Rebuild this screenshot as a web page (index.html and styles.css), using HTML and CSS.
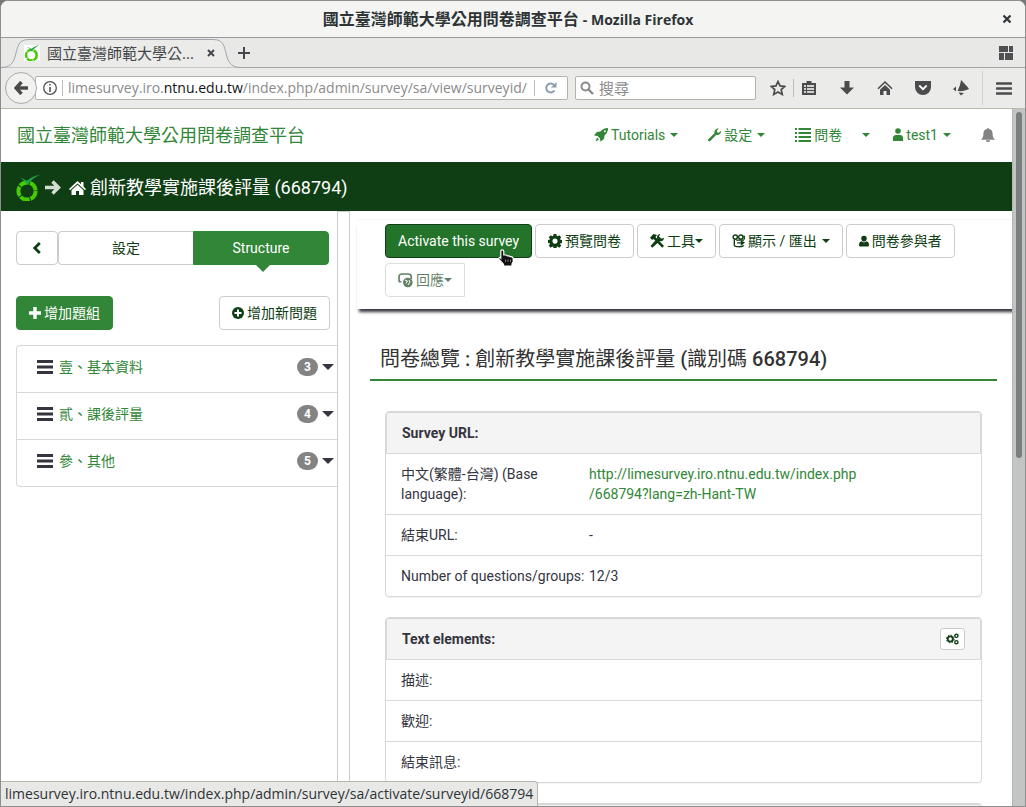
FILE: index.html
```html
<!DOCTYPE html>
<html lang="zh-Hant">
<head>
<meta charset="utf-8">
<title>國立臺灣師範大學公用問卷調查平台</title>
<link rel="stylesheet" href="styles.css">
</head>
<body>
<svg class="defs" aria-hidden="true">
  <defs>
    <symbol id="gear" viewBox="0 0 16 16"><path fill-rule="evenodd" d="M6.400 0h3.200l.4 2.300 1 .4 1.900-1.300 2.200 2.200-1.300 1.900.4 1 2.300.4v3.200l-2.300.4-.4 1 1.300 1.900-2.200 2.200-1.900-1.300-1 .4-.4 2.300H6.400l-.4-2.300-1-.4-1.900 1.300L.9 13.400l1.300-1.900-.4-1L0 10.100V6.900l1.800-.4.4-1L.9 3.600l2.200-2.200L5 2.700l1-.4zM8 5.200a2.900 2.900 0 1 0 0 5.800 2.900 2.900 0 0 0 0-5.800z"/></symbol>
    <symbol id="user" viewBox="0 0 12 14"><path d="M6 0a3.300 3.300 0 0 1 3.300 3.500C9.300 5.500 7.800 7.200 6 7.200S2.700 5.500 2.700 3.500A3.300 3.300 0 0 1 6 0zM3 6.700c.8.900 1.800 1.400 3 1.400s2.200-.5 3-1.400c2 .4 3 1.900 3 4.700 0 1-.6 1.600-1.600 1.600H1.600C.6 13 0 12.400 0 11.400 0 8.600 1 7.100 3 6.700z"/></symbol>
    <symbol id="home" viewBox="0 0 17 16"><path d="M8.500 1 12 4.300V2h2.500v4.600L17 9l-1 1.200L8.500 3.400 1 10.200 0 9z"/><path d="m8.500 4.800 6 5.400V15H10v-4H7v4H2.500v-4.800z"/></symbol>
    <symbol id="bars" viewBox="0 0 16 14"><path d="M0 0h16v3H0zM0 5.500h16v3H0zM0 11h16v3H0z"/></symbol>
    <symbol id="lime" viewBox="0 0 24 26"><circle cx="11" cy="16.500" r="8.600" fill="none" stroke="#4c0" stroke-width="4" stroke-dasharray="9.800 1"/><path fill="#19a843" d="M4 3c2.800.8 5 2 6.800 3.700C14 3.600 18 1.200 24 .3 18.500 2.800 14.500 6 11.500 10.500 9.500 7.500 7 5 4 3z"/></symbol>
  </defs>
</svg>

<div class="window">
  <header class="titlebar">
    <span class="window-title">國立臺灣師範大學公用問卷調查平台 <span>- Mozilla Firefox</span></span>
    <button class="plain window-close" aria-label="Close window"><svg width="10" height="10" viewBox="0 0 10 10"><path d="m1.500 1.500 7 7m0-7-7 7" stroke="#2e3436" stroke-width="2.200"/></svg></button>
  </header>

  <div class="tabstrip">
    <div class="tab">
      <svg class="tab-shape" viewBox="0 0 240 30" width="240" height="30"><path d="M0 29.500C8 29.500 12 26 14 19 17 8 17 1.500 28 1.500H212C223 1.500 223 8 226 19 228 26 232 29.500 240 29.500" fill="#ebebe9" stroke="#a0a4ac"/></svg>
      <svg class="tab-icon" width="16" height="16"><use href="#lime"/></svg>
      <span class="tab-title">國立臺灣師範大學公...</span>
      <button class="plain" aria-label="Close tab"><svg width="8" height="8" viewBox="0 0 8 8"><path d="m1 1 6 6m0-6L1 7" stroke="#44484a" stroke-width="2"/></svg></button>
    </div>
    <button class="plain new-tab" aria-label="New tab"><svg width="12" height="12" viewBox="0 0 12 12"><path d="M6 0v12M0 6h12" stroke="#44484a" stroke-width="2"/></svg></button>
    <button class="plain tab-groups" aria-label="Tab groups"><svg width="14" height="14" viewBox="0 0 14 14" fill="#505052"><path d="M0 0h9v6H0zM10 0h4v6h-4zM0 7h5v7H0zM6 7h8v7H6z"/></svg></button>
  </div>

  <div class="navbar">
    <button class="back" aria-label="Back"><svg width="14" height="14" viewBox="0 0 14 14"><path d="M7.500 1 2 7l5.500 6M2.500 7H14" fill="none" stroke="#4a4a4a" stroke-width="3.400"/></svg></button>
    <div class="urlbar">
      <svg width="16" height="16" viewBox="0 0 16 16"><circle cx="8" cy="8" r="6.300" fill="none" stroke="#505050" stroke-width="1.300"/><path d="M7.200 4h1.600v1.600H7.200zM7.200 7h1.600v5H7.200z" fill="#505050"/></svg>
      <span class="url-sep"></span>
      <div class="url" role="textbox" aria-label="Address" contenteditable="true">limesurvey.iro.<b>ntnu.edu.tw</b>/index.php/admin/survey/sa/view/surveyid/</div>
      <span class="url-sep reload-sep"></span>
      <button class="plain" aria-label="Reload"><svg width="12" height="12" viewBox="0 0 12 12"><path d="M9.500 8.500A4.500 4.500 0 1 1 9 2.900" fill="none" stroke="#8a9bad" stroke-width="1.900"/><path d="M11.500 0v5.500H6z" fill="#8a9bad"/></svg></button>
    </div>
    <label class="searchbar">
      <svg width="14" height="14" viewBox="0 0 14 14"><circle cx="5.500" cy="5.500" r="4" fill="none" stroke="#8a8a8a" stroke-width="2"/><path d="m8.500 8.500 4.500 4.500" stroke="#8a8a8a" stroke-width="2.400"/></svg>
      <input type="search" placeholder="搜尋" aria-label="搜尋">
    </label>
    <div class="nav-icons">
      <button class="plain" aria-label="Bookmark"><svg width="16" height="16" viewBox="0 0 16 16"><path d="m8 1.500 2 4.400 4.800.5-3.600 3.200 1.100 4.800L8 11.900l-4.300 2.500 1.100-4.800L1.200 6.400 6 5.900z" fill="none" stroke="#4c4c4c" stroke-width="1.700"/></svg></button>
      <span class="icon-sep"></span>
      <button class="plain" aria-label="Bookmarks list"><svg width="14" height="16" viewBox="0 0 14 16"><path d="M4.500 1h5v2H14v12H0V3h4.500z" fill="#4c4c4c"/><path d="M2 6h2m1 0h7M2 9h2m1 0h7M2 12h2m1 0h7" stroke="#fff" stroke-width="1.600"/></svg></button>
      <button class="plain" aria-label="Downloads"><svg width="14" height="16" viewBox="0 0 14 16"><path d="M4.500 1h5v6.500H14l-7 7-7-7h4.500z" fill="#4c4c4c"/></svg></button>
      <button class="plain" aria-label="Home page"><svg width="16" height="16" viewBox="0 0 16 16"><path d="M1 8.800 8 2l7 6.800" fill="none" stroke="#4c4c4c" stroke-width="1.600"/><path d="m8 5 5 4.800V15H9.500v-4h-3v4H3V9.800z" fill="#4c4c4c"/></svg></button>
      <button class="plain" aria-label="Pocket"><svg width="16" height="14" viewBox="0 0 16 14"><path d="M0 0h16v6a8 8 0 0 1-16 0z" fill="#4c4c4c"/><path d="m4.300 4.500 3.700 3.700 3.700-3.700" fill="none" stroke="#fff" stroke-width="1.800"/></svg></button>
      <button class="plain" aria-label="Extension"><svg width="16" height="16" viewBox="0 0 16 16" fill="#4c4c4c"><path d="M8 0c2 2 6 6 8 9-3 1.500-7 2.500-11.500 2C6 8 7.500 4 8 0zM3 6.500v5L0 9zM5.500 12.500 11 13l-3 2.500z"/></svg></button>
      <span class="icon-sep tall"></span>
      <button class="plain" aria-label="Menu"><svg width="16" height="13" viewBox="0 0 16 13"><path d="M1 1.500h14M1 6.500h14M1 11.500h14" stroke="#4c4c4c" stroke-width="2.600" stroke-linecap="round"/></svg></button>
    </div>
  </div>

  <div class="viewport">
    <div class="page">
      <nav class="site-nav">
        <a class="brand" href="#">國立臺灣師範大學公用問卷調查平台</a>
        <div class="site-links">
          <a href="#"><svg width="14" height="14" viewBox="0 0 14 14"><path d="M14 0c.1 3-1 5.300-3.500 7.500L10 11l-3.500 2.500-.6-3-2.300-2.400-3.600-.6L2.800 4l3.600-.5C8.600 1 11 0 14 0z"/><path d="M3 9.500 5 11.500 1.500 13.500z"/><circle cx="10.800" cy="3.200" r="1" fill="#fff"/></svg>Tutorials<i class="caret"></i></a>
          <a href="#"><svg width="13" height="14" viewBox="0 0 13 14"><path d="M11 .5 8.900 2.600l.3 1.800 1.800.3L13 2.800C13.300 5.500 11 7.600 8.300 6.800l-6 6.200c-1.200 1-2.900-.3-2-1.700l6.200-6C5.800 2.400 8.300-.1 11 .5z"/></svg>設定<i class="caret"></i></a>
          <a href="#"><svg width="16" height="14" viewBox="0 0 16 14"><path d="M0 0h2v2H0zM3.500 0H16v2H3.500zM0 4h2v2H0zM3.500 4H16v2H3.500zM0 8h2v2H0zM3.500 8H16v2H3.500zM0 12h2v2H0zM3.500 12H16v2H3.500z"/></svg>問卷</a>
          <a class="split" href="#" aria-label="問卷選單"><i class="caret"></i></a>
          <a class="account" href="#"><svg width="10" height="13" viewBox="0 0 10 13"><circle cx="5" cy="3" r="2.800"/><path d="M0 13V10C0 7.500 1.500 7 5 7s5 .5 5 3v3z"/></svg>test1<i class="caret"></i></a>
          <a class="bell" href="#" aria-label="Notifications"><svg width="14" height="14" viewBox="0 0 14 14"><path d="M6 1a1 1 0 0 1 2 0c2.500.5 3.600 2.300 3.600 4.500 0 3 .6 4.500 2.400 6.300H0c1.800-1.800 2.400-3.300 2.400-6.300C2.400 3.300 3.500 1.500 6 1zM5 12.200h4a2 2 0 0 1-4 0z"/></svg></a>
        </div>
      </nav>
      <div class="crumbs">
        <svg width="24" height="27"><use href="#lime"/></svg>
        <svg class="arrow" width="16" height="15" viewBox="0 0 16 15"><path d="m7.500 1.500 6 6-6 6M0 7.500h12.500" fill="none" stroke="#d5dcd5" stroke-width="3.400"/></svg>
        <a href="#"><svg width="17" height="16"><use href="#home"/></svg>創新教學實施課後評量 (668794)</a>
      </div>

      <div class="columns">
        <aside class="sidebar">
          <div class="switcher">
            <button class="btn collapse" aria-label="Collapse"><svg width="10" height="14" viewBox="0 0 10 14"><path d="M7.800 2 2.800 7l5 5" fill="none" stroke="#0f3e14" stroke-width="2.800"/></svg></button>
            <button class="btn grow left">設定</button>
            <button class="btn grow right active">Structure</button>
          </div>
          <div class="add-row">
            <button class="btn active"><svg width="12" height="12" viewBox="0 0 12 12"><path d="M6 0v12M0 6h12" stroke="#fff" stroke-width="3.400"/></svg>增加題組</button>
            <button class="btn"><svg width="12" height="12" viewBox="0 0 12 12"><circle cx="6" cy="6" r="6"/><path d="M6 2.500v7M2.500 6h7" stroke="#fff" stroke-width="2"/></svg>增加新問題</button>
          </div>
          <ul class="groups">
            <li><svg width="16" height="14"><use href="#bars"/></svg><a href="#">壹、基本資料</a><span class="badge">3</span><i class="caret big"></i></li>
            <li><svg width="16" height="14"><use href="#bars"/></svg><a href="#">貳、課後評量</a><span class="badge">4</span><i class="caret big"></i></li>
            <li><svg width="16" height="14"><use href="#bars"/></svg><a href="#">參、其他</a><span class="badge">5</span><i class="caret big"></i></li>
          </ul>
        </aside>
        <div class="splitter"></div>
        <main class="main">
          <div class="toolbar">
            <button class="btn primary">Activate this survey
              <svg class="pointer" width="16" height="18" viewBox="0 0 16 18"><path d="M4 .8C5.200.8 5.800 1.500 5.800 2.500V6h2c.6 0 1.200.3 1.500.8h1.500c.6 0 1.100.3 1.400.8.8-.1 3 .1 3 2.200v3l-1.200 2V17H5.500v-1.800L1 10.500c-.9-1.500.8-2.700 1.800-1.500V2.500c0-1 .3-1.700 1.200-1.700z" fill="#111" stroke="#fff" stroke-width="1.200"/><path d="M7.500 10.500v2.500m2.500-2.500v2.500m2.500-2.500v2.500" stroke="#777"/></svg></button>
            <button class="btn"><svg width="14" height="14"><use href="#gear"/></svg>預覽問卷</button>
            <button class="btn"><svg width="14" height="14" viewBox="0 0 14 14"><path d="M0 3.500 3.500 0 7 1 5.500 3l8.500 9-1.800 1.800L3.500 5 2 6z"/><path d="M10 0 9 2.500l2.300 2.200 2.500-.9c.3 2.700-2 4-4 3.300l-7.500 6.700L.5 12l6.700-7.500C6.500 2 8 0 10 0z"/></svg>工具<i class="caret tight"></i></button>
            <button class="btn"><svg width="13" height="14" viewBox="0 0 14 15" fill="none" stroke="#0f3e14" stroke-width="1.500"><circle cx="3.500" cy="3.300" r="2.300"/><circle cx="9.500" cy="3.300" r="2.300"/><path d="M12 2.500h1.200V6M2.500 6v6c0 1.800 9 2.500 10 0M4.500 6.500H13M5.500 9.500h5"/><path d="m9.500 6.500 4.500 3-4.500 3z" fill="#0f3e14" stroke="none"/></svg>顯示 / 匯出<i class="caret"></i></button>
            <button class="btn"><svg width="10" height="13"><use href="#user"/></svg>問卷參與者</button>
            <button class="btn muted" disabled><svg width="15" height="15" viewBox="0 0 15 15"><path d="M3.500 9H2.800C1.500 9 1 8 1 7V4c0-2 1-3 3-3h6c2 0 3.300 1 3.300 3v2" fill="none" stroke="#0f3e14" stroke-width="1.700"/><circle cx="9.800" cy="9.500" r="4.800"/><path d="m7 7 2.500 1L8 10.500M11 7l1 2-2 3M3 9l2 4" stroke="#fff" fill="none"/></svg>回應<i class="caret tight"></i></button>
          </div>
          <div class="overview">
            <h3>問卷總覽 <b>:</b> 創新教學實施課後評量 <b>(</b>識別碼 <b>668794)</b></h3>
            <section class="panel">
              <h4>Survey URL:</h4>
              <table>
                <tr><th scope="row">中文(繁體-台灣) (Base language):</th><td><a href="#">http://limesurvey.iro.ntnu.edu.tw/index.php<br>/668794?lang=zh-Hant-TW</a></td></tr>
                <tr><th scope="row">結束URL:</th><td>-</td></tr>
                <tr><th scope="row">Number of questions/groups:</th><td>12/3</td></tr>
              </table>
            </section>
            <section class="panel">
              <h4>Text elements:<button class="btn small" aria-label="Edit text elements"><svg width="13" height="12" viewBox="0 0 13 12" fill="none" stroke="#0f3e14"><circle cx="4.300" cy="6" r="2.600" stroke-width="1.900"/><circle cx="4.300" cy="6" r="3.900" stroke-dasharray="1.500 1.560"/><circle cx="10.400" cy="2.800" r="1.600" stroke-width="1.400"/><circle cx="10.400" cy="9.200" r="1.600" stroke-width="1.400"/></svg></button></h4>
              <table>
                <tr><th scope="row">描述:</th><td></td></tr>
                <tr><th scope="row">歡迎:</th><td></td></tr>
                <tr><th scope="row">結束訊息:</th><td></td></tr>
              </table>
            </section>
            <section class="panel"><h4></h4></section>
          </div>
        </main>
      </div>
    </div>
    <div class="scrollbar"><div class="thumb"></div></div>
    <div class="status">limesurvey.iro.ntnu.edu.tw/index.php/admin/survey/sa/activate/surveyid/668794</div>
  </div>
</div>
</body>
</html>
```
FILE: styles.css
```css
* { box-sizing: border-box; }
:root {
  --green: #328637;
  --dark: #0f3e14;
  --line: #d8d8d8;
  --chrome: "Open Sans", "Noto Sans", "Noto Sans CJK TC", sans-serif;
}
body { margin: 0; background: #77787a; font-family: Roboto, "Noto Sans CJK TC", sans-serif; font-size: 14px; line-height: 20px; color: #35353f; }
.defs { position: absolute; width: 0; height: 0; }
button, input { font: inherit; color: inherit; }
a { color: var(--green); text-decoration: none; }
svg { flex: none; }
svg:not([fill]) { fill: currentColor; }
.plain { display: flex; align-items: center; justify-content: center; padding: 0; border: 0; background: none; }

.window { display: flex; flex-direction: column; height: 100vh; overflow: hidden; border: 1px solid #8e8e8e; border-radius: 8px 8px 0 0; background: #fff; }

.titlebar { flex: none; display: flex; align-items: center; height: 37px; padding: 0 13px; border-bottom: 1px solid #999; background: #f4f4f3; font-family: var(--chrome); font-weight: bold; color: #2e3436; }
.window-title { flex: 1; text-align: center; font-size: 16px; }
.window-title span { font-size: 14px; }
.tabstrip { flex: none; display: flex; align-items: center; height: 30px; padding-right: 12px; border-bottom: 1px solid #a3a3a3; background: #e8e8e7; font-family: var(--chrome); }
.tab { position: relative; display: flex; align-items: center; gap: 7px; width: 240px; height: 30px; padding: 0 26px 0 23px; }
.tab > * { position: relative; }
.tab .tab-shape { position: absolute; left: 0; top: 0; }
.tab-icon { background: #fff; }
.tab-title { flex: 1; font-size: 15px; white-space: nowrap; color: #44484a; }
.new-tab { margin-left: -3px; }
.tab-groups { margin-left: auto; }

.navbar { flex: none; display: flex; align-items: center; height: 41px; padding: 0 13px 0 4px; border-bottom: 1px solid #b9b9b0; background: #ebebea; font-family: var(--chrome); color: #8a8a8a; }
.back { position: relative; z-index: 1; display: flex; align-items: center; justify-content: center; flex: none; width: 32px; height: 32px; padding: 0; border: 1px solid #aaaaa4; border-radius: 50%; background: #f1f1f0; }
.urlbar, .searchbar { display: flex; align-items: center; height: 24px; border: 1px solid #b3b3ab; border-radius: 2px; background: #fff; }
.urlbar { flex: 1; min-width: 0; margin-left: -2px; padding: 0 10px 0 6px; }
.url { flex: 1; min-width: 0; overflow: hidden; white-space: nowrap; line-height: 20px; }
.url b { font-weight: normal; color: #111; }
.url-sep { width: 1px; height: 16px; margin: 0 5px 0 4px; background: #bbb; }
.reload-sep { margin: 0 10px 0 0; }
.searchbar { flex: 0 1 181px; min-width: 0; margin-left: 7px; padding: 0 4px; gap: 5px; }
.searchbar input { flex: 1; min-width: 0; padding: 0; border: 0; outline: 0; background: none; font-size: 15px; }
.searchbar input::placeholder { color: #8a8a8a; opacity: 1; }
.nav-icons { display: flex; align-items: center; gap: 22px; flex: none; margin-left: 14px; }
.nav-icons .plain { width: 16px; }
.icon-sep { width: 1px; height: 18px; margin: 0 -15px; background: #bbb; }
.icon-sep.tall { height: 34px; margin: 0 -9px; background: #d2d2d0; }

.viewport { position: relative; flex: 1; display: flex; min-height: 0; }
.page { flex: 1; min-width: 0; display: flex; flex-direction: column; }
.scrollbar { flex: none; width: 13px; padding: 3px; background: #c3c5c4; border-left: 1px solid #b3b5b4; }
.thumb { height: 50%; border-radius: 4px; background: #7b7e7e; }
.status { position: absolute; left: 0; bottom: 0; padding: 2px 4px; border: 1px solid #b5b5ad; border-width: 1px 1px 0 0; border-radius: 0 4px 0 0; background: #e8e8e7; font-family: var(--chrome); color: #2e3436; }

.site-nav { flex: none; display: flex; align-items: center; justify-content: space-between; height: 53px; padding: 0 17px 0 16px; }
.brand { font-size: 18px; white-space: nowrap; }
.site-links { display: flex; gap: 30px; padding-bottom: 2px; }
.site-links a { display: flex; align-items: center; gap: 3px; white-space: nowrap; }
.site-links .split { margin-left: -10px; }
.site-links .account { margin-left: -7px; }
.site-links .bell { color: #838383; }
.caret { flex: none; width: 8px; border: 4px solid transparent; border-top-color: currentColor; border-bottom: 0; margin-left: 2px; }
.split .caret { margin-left: 0; }
.caret.tight { margin-left: -3px; }
.caret.big { width: 12px; border-width: 6px 6px 0; margin-left: 4px; }

.crumbs { flex: none; display: flex; align-items: center; height: 49px; padding: 2px 15px 0; background: var(--dark); color: #fff; font-size: 18px; }
.crumbs .arrow { margin: 0 8px 0 5px; }
.crumbs a { display: flex; align-items: center; gap: 4px; color: #fff; white-space: nowrap; }

.columns { flex: 1; min-height: 0; display: flex; }
.sidebar { flex: none; width: 34%; max-width: 336px; padding: 20px 0 0 15px; }
.splitter { flex: none; width: 13px; border: 1px solid #ccc; border-bottom: 0; }
.btn { display: inline-flex; align-items: center; justify-content: center; gap: 3px; height: 34px; padding: 0 12px; border: 1px solid #ccc; border-radius: 4px; background: #fff; color: var(--dark); white-space: nowrap; }
.btn.active { border-color: var(--green); background: var(--green); color: #fff; }
.btn.primary { position: relative; border-color: var(--dark); background: #23742a; color: #fff; }
.btn.muted { opacity: .65; border-radius: 4px 0 0 4px; }
.btn.small { width: 25px; height: 22px; padding: 0; border-radius: 3px; }
.btn.collapse { padding: 0 15px; }
.btn.grow { flex: 1; }
.btn.left { border-radius: 4px 0 0 4px; border-right: 0; }
.btn.right { position: relative; border-radius: 0 4px 4px 0; }
.btn.right::after { content: ""; position: absolute; top: 100%; left: 50%; margin-left: -6px; border: 8px solid transparent; border-top-color: var(--green); border-bottom: 0; }
.switcher { display: flex; margin-right: 8px; }
.add-row { display: flex; justify-content: space-between; margin: 31px 7px 15px 0; }
.groups { margin: 0; padding: 0; list-style: none; border: 1px solid var(--line); border-width: 1px 0 0 1px; border-radius: 4px 0 0 4px; }
.groups li { display: flex; align-items: center; height: 47px; padding: 0 3px 5px 20px; border-bottom: 1px solid var(--line); }
.groups li:last-child { border-radius: 0 0 0 4px; }
.groups a { flex: 1; margin-left: 6px; }
.badge { min-width: 21px; padding: 0 7px; border-radius: 9px; background: #838383; color: #fff; font-size: 12px; line-height: 18px; font-weight: bold; }

.main { flex: 1; min-width: 0; display: flex; flex-direction: column; overflow: hidden; }
.toolbar { flex: none; display: flex; flex-wrap: wrap; gap: 5px 3px; margin: 8px -6px 0 7px; padding: 4px 20px 12px 28px; border-top: 1px solid #f5f5f5; background: #fff; box-shadow: 0 5px 3px -2px #35353f; }
.pointer { position: absolute; left: 112px; top: 24px; }
.overview { padding: 31px 15px 0 20px; }
h3 { margin: 0 0 30px; padding: 8px 10px 9px; border-bottom: 2px solid var(--green); font-size: 20px; line-height: 22px; font-weight: normal; color: #333; }
h3 b { font-weight: 500; }
.panel { margin: 0 15px 20px; border: 1px solid var(--line); border-radius: 4px; box-shadow: 0 1px 1px #0000000d; }
.panel h4 { display: flex; align-items: center; justify-content: space-between; height: 42px; margin: 0; padding: 0 15px; border: 1px solid var(--line); border-radius: 3px 3px 0 0; background: #f4f4f4; font-size: 14px; line-height: 20px; }
.panel table { width: 100%; border-collapse: collapse; }
.panel tr + tr { border-top: 1px solid var(--line); }
.panel th, .panel td { padding: 10px 0; text-align: left; vertical-align: top; font-weight: normal; }
.panel th { width: 203px; padding: 10px 4px 10px 15px; }
```
